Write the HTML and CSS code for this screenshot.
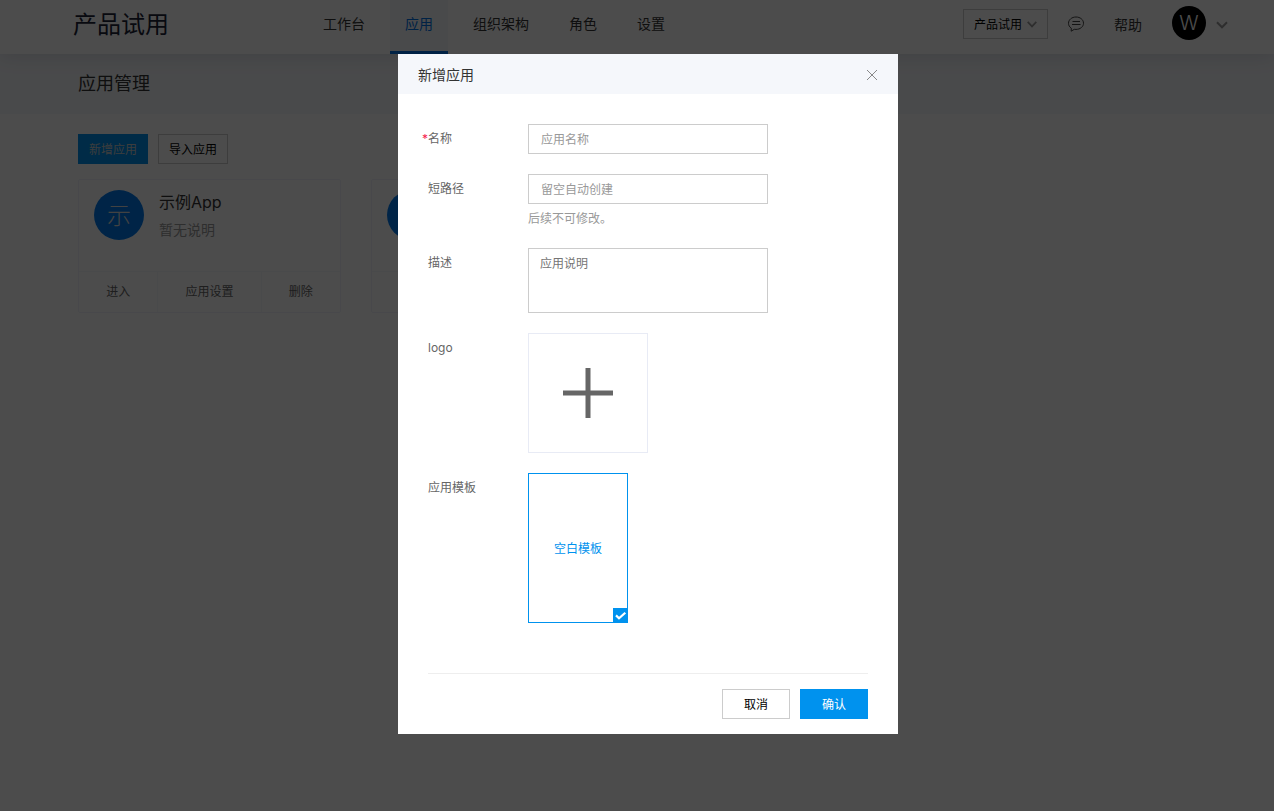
FILE: index.html
```html
<!DOCTYPE html>
<html lang="zh-CN">
<head>
<meta charset="utf-8">
<meta name="viewport" content="width=device-width, initial-scale=1">
<title>应用管理</title>
<link rel="stylesheet" href="styles.css">
</head>
<body>
<header class="header">
  <div class="brand">产品试用</div>
  <nav class="nav">
    <a class="nav-item" href="#">工作台</a>
    <a class="nav-item active" href="#">应用</a>
    <a class="nav-item" href="#">组织架构</a>
    <a class="nav-item" href="#">角色</a>
    <a class="nav-item" href="#">设置</a>
  </nav>
  <div class="tools">
    <div class="team">
      <select class="team-select" aria-label="团队"><option>产品试用</option></select>
      <svg class="team-arrow" width="10" height="7" viewBox="0 0 10 7"><path d="M0.7 0.9 5 5.4 9.3 0.9" fill="none" stroke="#999" stroke-width="1.7"/></svg>
    </div>
    <button class="icon-button" type="button" aria-label="消息">
      <svg width="16" height="16" viewBox="0 0 16 16" fill="none" stroke="#444" stroke-width="1"><path d="M3.2 15.200 3.300 12.200C1.500 11 .5 9.300.5 7.300.5 3.700 3.800 1 8 1s7.500 2.700 7.500 6.200-3.300 6.200-7.500 6.200c-.6 0-1.200 0-1.700-.1z"/><path d="M4.500 5.500h7.500M4 8.500h8.500"/></svg>
    </button>
    <a class="help" href="#">帮助</a>
    <button class="user" type="button" aria-label="账户">
      <span class="user-avatar">W</span>
      <svg class="user-arrow" width="12" height="8" viewBox="0 0 12 8"><path d="M1 1.200 6 6.300 11 1.200" fill="none" stroke="#999" stroke-width="2"/></svg>
    </button>
  </div>
</header>
<div class="page-title"><h1>应用管理</h1></div>
<main class="content">
  <div class="actions">
    <button class="button primary" type="button">新增应用</button>
    <button class="button" type="button">导入应用</button>
  </div>
  <div class="cards">
    <article class="card">
      <div class="card-body">
        <span class="app-avatar">示</span>
        <div>
          <h2 class="app-name">示例App</h2>
          <p class="app-note">暂无说明</p>
        </div>
      </div>
      <div class="card-foot"><a href="#">进入</a><a href="#">应用设置</a><a href="#">删除</a></div>
    </article>
    <article class="card">
      <div class="card-body"><span class="app-avatar"></span></div>
      <div class="card-foot"></div>
    </article>
  </div>
</main>

<div class="overlay">
  <form class="dialog" role="dialog" aria-modal="true" aria-labelledby="dialog-title">
    <div class="dialog-head">
      <h2 id="dialog-title">新增应用</h2>
      <button class="icon-button" type="button" aria-label="关闭">
        <svg width="12" height="12" viewBox="0 0 12 12"><path d="M1 1 11 11M11 1 1 11" stroke="#888" fill="none"/></svg>
      </button>
    </div>
    <div class="fields">
      <div class="field">
        <label class="required" for="name">名称</label>
        <input class="control" id="name" type="text" placeholder="应用名称" required>
      </div>
      <div class="field">
        <label for="path">短路径</label>
        <div>
          <input class="control" id="path" type="text" placeholder="留空自动创建">
          <p class="hint">后续不可修改。</p>
        </div>
      </div>
      <div class="field">
        <label for="desc">描述</label>
        <textarea class="control area" id="desc" placeholder="应用说明"></textarea>
      </div>
      <div class="field">
        <span id="logo-label">logo</span>
        <button class="upload" type="button" aria-labelledby="logo-label">
          <svg width="50" height="50" viewBox="0 0 50 50"><path d="M25 0V50M0 25H50" stroke="#666" stroke-width="5" fill="none"/></svg>
        </button>
      </div>
      <div class="field">
        <span>应用模板</span>
        <label class="template">
          <input type="radio" name="template" checked>
          <span>空白模板</span>
          <svg class="template-mark" width="15" height="15" viewBox="0 0 15 15"><path fill="#0092ee" d="M0 0H15V15H0z"/><path d="M3 7.400 6 10.300 12.300 4.700" fill="none" stroke="#fff" stroke-width="2.200"/></svg>
        </label>
      </div>
    </div>
    <div class="dialog-foot">
      <button class="button wide" type="button">取消</button>
      <button class="button wide primary" type="submit">确认</button>
    </div>
  </form>
</div>
</body>
</html>
```

FILE: styles.css
```css
* { box-sizing: border-box; }

body {
  margin: 0;
  min-height: 100vh;
  background: #fff;
  color: #333;
  font: 12px/18px Inter, "Noto Sans CJK SC", sans-serif;
}

h1, h2, p { margin: 0; font-weight: 400; }
a { color: inherit; text-decoration: none; }
button, input, select, textarea { font: inherit; color: inherit; }

.header {
  position: relative;
  z-index: 1;
  display: flex;
  align-items: flex-start;
  height: 54px;
  padding: 0 46px 0 73px;
  background: #fff;
  box-shadow: 0 2px 20px rgba(0, 0, 30, 0.12);
}

.brand {
  color: #1c2438;
  font-size: 24px;
  line-height: 50px;
}

.nav {
  display: flex;
  gap: 10px;
  margin-left: 139px;
}

.nav-item {
  height: 54px;
  padding: 0 15px;
  border-bottom: 3px solid transparent;
  font-size: 14px;
  line-height: 48px;
}

.nav-item.active {
  border-color: #0073e6;
  background: #f5f7fb;
  color: #0073e6;
}

.tools {
  display: flex;
  align-items: center;
  height: 48px;
  margin-left: auto;
}

.team {
  position: relative;
  margin-right: 20px;
}

.team-select {
  display: block;
  width: 85px;
  height: 30px;
  padding: 2px 24px 0 10px;
  border: 1px solid #ccc;
  border-radius: 0;
  appearance: none;
  background: #fff;
  color: #000;
}

.team-arrow {
  position: absolute;
  top: 12px;
  right: 11px;
  pointer-events: none;
}

.icon-button, .user {
  display: flex;
  align-items: center;
  padding: 0;
  border: 0;
  background: none;
}

.help {
  margin: 0 30px;
  padding-top: 2px;
  font-size: 14px;
}

.user {
  gap: 10px;
  padding-bottom: 2px;
}

.user-avatar {
  width: 34px;
  height: 34px;
  border-radius: 50%;
  background: #000;
  color: #fff;
  font-size: 20px;
  font-weight: 300;
  line-height: 34px;
  text-align: center;
}

.user-arrow { margin-top: 4px; }

.page-title {
  padding: 15px 78px;
  background: #f5f7fb;
}

.page-title h1 {
  font-size: 18px;
  line-height: 30px;
}

.content { padding: 20px 54px 20px 78px; }

.actions {
  display: flex;
  gap: 10px;
  margin-bottom: 15px;
}

.button {
  height: 30px;
  padding: 2px 10px 0;
  border: 1px solid #ccc;
  background: #fff;
  color: #000;
}

.button.wide { padding: 1px 21px 0; }

.button.primary {
  border-color: #0092ee;
  background: #0092ee;
  color: #fff;
}

.actions .primary { color: #ccc; }

.cards {
  display: grid;
  grid-template-columns: repeat(4, 1fr);
  gap: 30px;
}

.card {
  min-width: 0;
  border: 1px solid #f0f2fa;
  border-radius: 2px;
}

.card-body {
  display: flex;
  gap: 15px;
  min-height: 91px;
  padding: 10px 15px;
}

.app-avatar {
  width: 50px;
  height: 50px;
  border-radius: 50%;
  background: #007aee;
  color: #ddd;
  font-size: 24px;
  font-weight: 300;
  line-height: 52px;
  text-align: center;
}

.app-name {
  font-size: 16px;
  line-height: 24px;
}

.app-note {
  margin-top: 4px;
  color: #999;
  font-size: 14px;
  line-height: 24px;
}

.card-foot {
  display: flex;
  min-height: 41px;
  border-top: 1px solid #f6f7fb;
  color: #666;
  line-height: 40px;
  text-align: center;
}

.card-foot a { flex: 1 1 auto; padding: 0 20px; }
.card-foot a + a { border-left: 1px solid #f6f7fb; }

.overlay {
  position: fixed;
  inset: 0;
  z-index: 10;
  display: flex;
  align-items: flex-start;
  justify-content: center;
  padding: 54px 0 54px 22px;
  overflow: auto;
  background: rgba(0, 0, 0, 0.7);
}

.dialog {
  width: 500px;
  max-width: 100%;
  background: #fff;
}

.dialog-head {
  display: flex;
  align-items: center;
  justify-content: space-between;
  height: 40px;
  padding: 2px 20px 0;
  background: #f5f7fb;
}

.dialog-head h2 {
  font-size: 14px;
  line-height: 38px;
}

.fields {
  display: grid;
  gap: 20px;
  padding: 30px 30px 50px;
  color: #666;
}

.field {
  display: grid;
  grid-template-columns: 100px 1fr;
  align-items: start;
  line-height: 30px;
}

.required { position: relative; }

.required::before {
  content: "*";
  position: absolute;
  left: -6px;
  color: #f5224d;
}

.control {
  display: block;
  width: 240px;
  max-width: 100%;
  height: 30px;
  padding: 1px 12px 0;
  border: 1px solid #ccc;
  border-radius: 0;
  background: #fff;
  color: #333;
}

.control::placeholder { color: #999; }

.control.area {
  height: 65px;
  padding: 6px 11px;
  line-height: 18px;
  resize: none;
}

.control.area::placeholder { color: #757575; }

.hint {
  margin-top: 6px;
  color: #999;
  line-height: 18px;
}

.upload {
  display: grid;
  place-items: center;
  width: 120px;
  height: 120px;
  padding: 0;
  border: 1px solid #e8ebf5;
  background: #fff;
}

.template {
  position: relative;
  display: grid;
  place-items: center;
  width: 100px;
  height: 150px;
  padding-top: 2px;
  border: 1px solid #0092ee;
  color: #0092ee;
}

.template input {
  position: absolute;
  margin: 0;
  opacity: 0;
}

.template-mark {
  position: absolute;
  right: -1px;
  bottom: -1px;
}

.dialog-foot {
  display: flex;
  justify-content: flex-end;
  gap: 10px;
  margin: 0 30px;
  padding: 15px 0;
  border-top: 1px solid #eee;
}
```
